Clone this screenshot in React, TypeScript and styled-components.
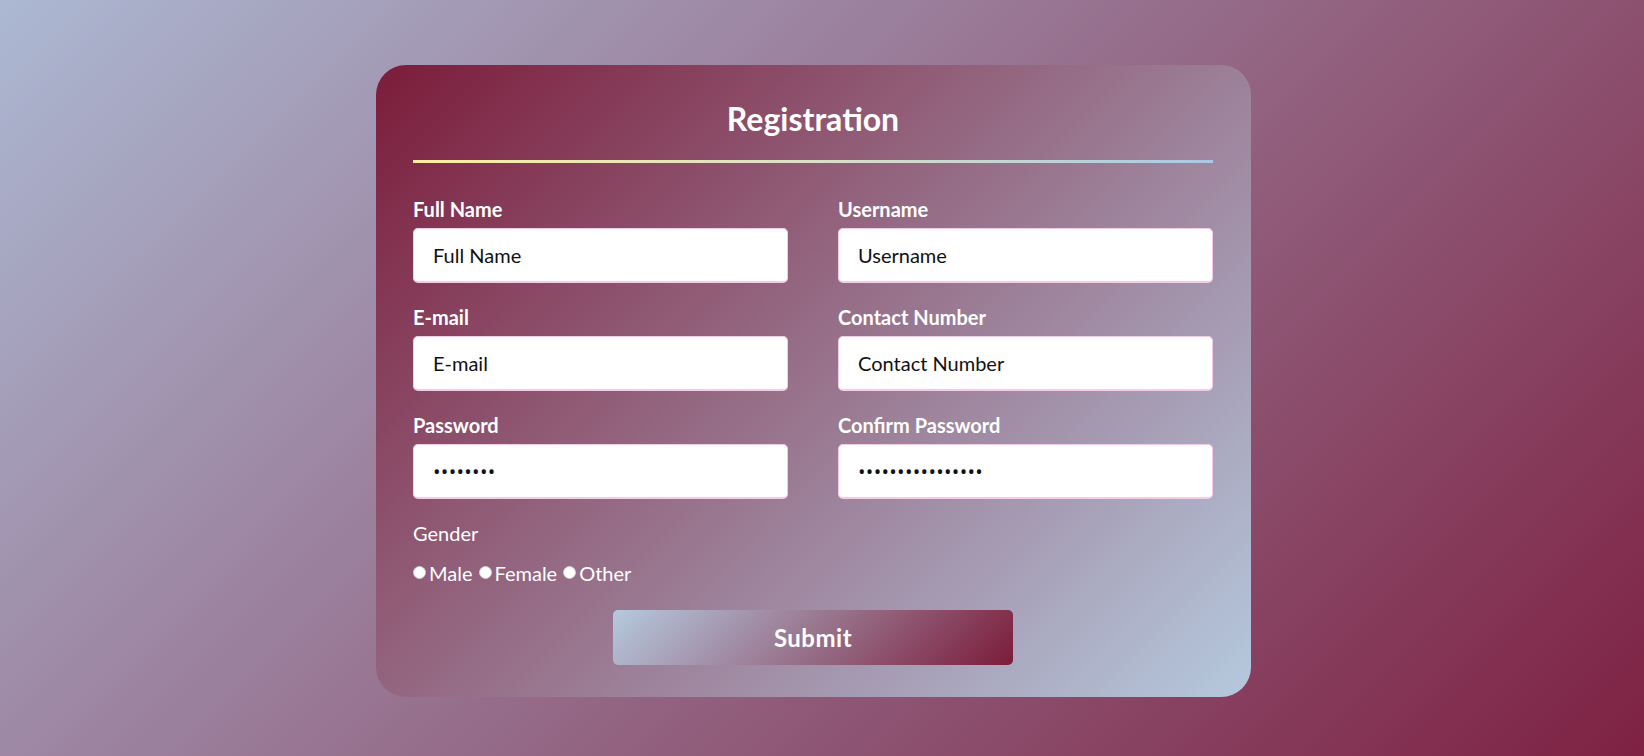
import React from "react";
import styled, { createGlobalStyle } from "styled-components";

const GlobalStyle = createGlobalStyle`
  *, *::before, *::after { box-sizing: border-box; }
  html, body { margin: 0; padding: 0; }
  body {
    min-height: 100vh;
    background: linear-gradient(135deg, #acb8d2 0%, #7e2142 100%);
    font-family: Lato, "Open Sans", sans-serif;
  }
`;

const Page = styled.main`
  min-height: 100vh;
  display: flex;
  justify-content: center;
  align-items: flex-start;
  padding: 65px 17px 0 0;
`;

const Card = styled.form`
  width: 875px;
  padding: 34px 38px 32px 37px;
  border-radius: 30px;
  background: linear-gradient(135deg, #7b1c3a 0%, #b5c9de 100%);
  display: flex;
  flex-direction: column;
`;

const Title = styled.h1`
  margin: 0;
  text-align: center;
  font-size: 32px;
  font-weight: 700;
  line-height: 40px;
  color: #ffffff;
`;

const Divider = styled.div`
  margin-top: 21px;
  height: 3px;
  background: linear-gradient(to right, #fbeea2 0%, #d9e0c6 50%, #a9c9e2 100%);
`;

const Grid = styled.div`
  margin-top: 34px;
  display: grid;
  grid-template-columns: 1fr 1fr;
  column-gap: 50px;
  row-gap: 22px;
`;

const Field = styled.div`
  display: flex;
  flex-direction: column;
  gap: 7px;
`;

const Label = styled.label`
  font-size: 20px;
  font-weight: 700;
  line-height: 24px;
  color: #ffffff;
`;

const Input = styled.input`
  height: 55px;
  width: 100%;
  border: 1px solid #f5cbe7;
  border-bottom-width: 2px;
  border-radius: 5px;
  padding: 0 19px;
  font-family: Lato, "Open Sans", sans-serif;
  font-size: 20px;
  color: #111111;
  background: #ffffff;
  outline: none;

  &[type="password"] {
    font-family: "Open Sans", sans-serif;
    font-size: 20px;
    letter-spacing: 0.3px;
  }
`;

const GenderBlock = styled.div`
  margin-top: 22px;
  display: flex;
  flex-direction: column;
  gap: 16px;
  color: #ffffff;
`;

const GenderTitle = styled.span`
  font-size: 20px;
  line-height: 24px;
`;

const Options = styled.div`
  display: flex;
  gap: 6px;
`;

const Option = styled.label`
  display: inline-flex;
  align-items: center;
  gap: 3px;
  font-size: 20px;
  line-height: 24px;
`;

const Radio = styled.input`
  appearance: none;
  width: 13px;
  height: 13px;
  margin: 0 0 1px 0;
  border-radius: 50%;
  background: #ffffff;
  border: 1px solid #cfcfcf;
`;

const Submit = styled.button`
  margin-top: 25px;
  align-self: center;
  width: 400px;
  height: 55px;
  border: none;
  border-radius: 5px;
  background: linear-gradient(135deg, #b5c9de 0%, #7b1c3a 100%);
  color: #ffffff;
  font-family: Lato, "Open Sans", sans-serif;
  font-size: 24px;
  font-weight: 700;
  letter-spacing: 0.5px;
  cursor: pointer;
`;

const fields = [
  { label: "Full Name", type: "text", value: "Full Name" },
  { label: "Username", type: "text", value: "Username" },
  { label: "E-mail", type: "text", value: "E-mail" },
  { label: "Contact Number", type: "text", value: "Contact Number" },
  { label: "Password", type: "password", value: "password" },
  { label: "Confirm Password", type: "password", value: "confirmpassword1" },
];

export default function App() {
  return (
    <>
      <GlobalStyle />
      <Page>
        <Card onSubmit={(e) => e.preventDefault()}>
          <Title>Registration</Title>
          <Divider />
          <Grid>
            {fields.map((f) => (
              <Field key={f.label}>
                <Label>{f.label}</Label>
                <Input type={f.type} defaultValue={f.value} />
              </Field>
            ))}
          </Grid>
          <GenderBlock>
            <GenderTitle>Gender</GenderTitle>
            <Options>
              {["Male", "Female", "Other"].map((g) => (
                <Option key={g}>
                  <Radio type="radio" name="gender" value={g} />
                  {g}
                </Option>
              ))}
            </Options>
          </GenderBlock>
          <Submit type="submit">Submit</Submit>
        </Card>
      </Page>
    </>
  );
}
